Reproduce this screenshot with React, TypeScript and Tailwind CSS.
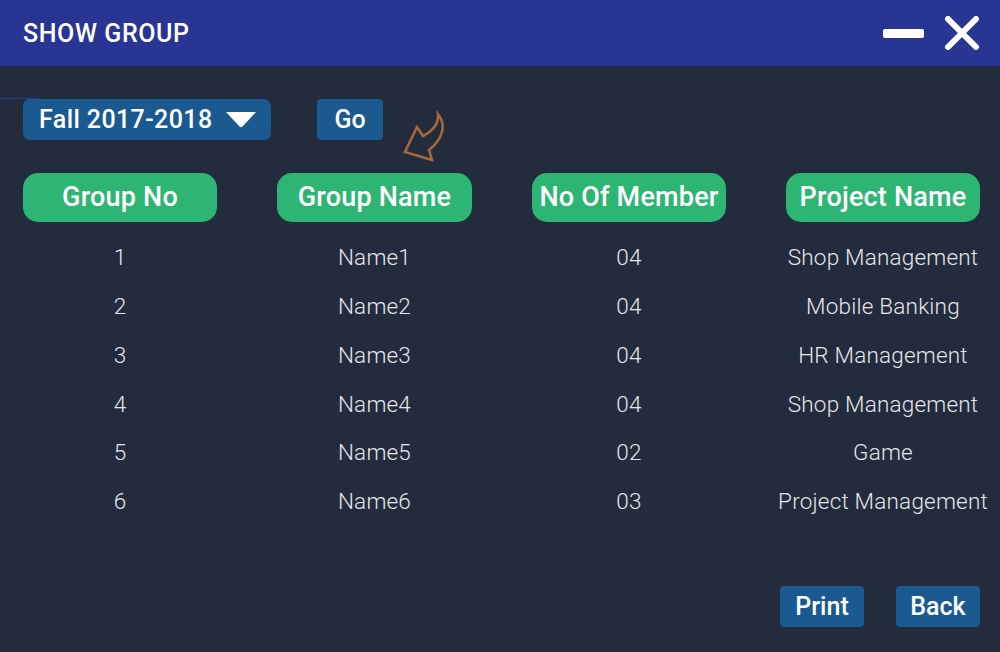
import React from 'react';

const rows = [
  { no: '1', name: 'Name1', members: '04', project: 'Shop Management' },
  { no: '2', name: 'Name2', members: '04', project: 'Mobile Banking' },
  { no: '3', name: 'Name3', members: '04', project: 'HR Management' },
  { no: '4', name: 'Name4', members: '04', project: 'Shop Management' },
  { no: '5', name: 'Name5', members: '02', project: 'Game' },
  { no: '6', name: 'Name6', members: '03', project: 'Project Management' },
];

const headers = ['Group No', 'Group Name', 'No Of Member', 'Project Name'];

export default function App() {
  return (
    <div className="w-[1000px] h-[652px] bg-[#222c3c] flex flex-col font-['Roboto',sans-serif] text-white overflow-hidden">
      {/* Title bar */}
      <div className="h-[66px] bg-[#283593] flex items-center pl-[23px] pr-[20px] shrink-0">
        <h1 className="text-[25px] font-medium tracking-[0.6px] flex-1 pt-[1px]">SHOW GROUP</h1>
        <div className="w-[41px] h-[9px] bg-white rounded-[2px] mr-[20px]" />
        <svg width="36" height="34" viewBox="0 0 36 34">
          <path d="M4 3 L32 31 M32 3 L4 31" stroke="white" strokeWidth="6" strokeLinecap="round" />
        </svg>
      </div>

      <div className="relative flex-1 flex flex-col">
        {/* stray guide line */}
        <div className="absolute left-0 top-[32px] w-[38px] h-px bg-[#2c3a8c]" />

        {/* Semester selector */}
        <div className="flex items-center gap-[46px] pl-[23px] pt-[33px]">
          <button className="h-[41px] w-[248px] bg-[#1b5a91] rounded-[7px] flex items-center pl-[16px] pr-[14px] text-[25px] font-medium tracking-[0.4px]">
            <span className="flex-1 text-left">Fall 2017-2018</span>
            <svg width="32" height="17" viewBox="0 0 32 17">
              <path d="M1 1 H31 L17.5 15.5 Q16 17 14.5 15.5 Z" fill="white" />
            </svg>
          </button>
          <button className="h-[41px] w-[66px] bg-[#1b5a91] rounded-[4px] text-[25px] font-medium">Go</button>
        </div>

        {/* annotation arrow */}
        <svg className="absolute left-[400px] top-[44px]" width="50" height="56" viewBox="400 110 50 56">
          <path
            d="M438 114 C446 124 444 138 429 150 L432 160 L405 152 L417 127 L423 136 C431 132 439 126 438 114 Z"
            fill="none"
            stroke="#a4683a"
            strokeWidth="2.6"
            strokeLinejoin="miter"
          />
        </svg>

        {/* Table */}
        <div className="grid grid-cols-[194px_195px_194px_194px] gap-x-[60px] pl-[23px] mt-[33px]">
          {headers.map((h) => (
            <div
              key={h}
              className="h-[49px] bg-[#2db673] rounded-[15px] flex items-center justify-center text-[27px] font-medium tracking-[0.2px] whitespace-nowrap"
            >
              {h}
            </div>
          ))}
        </div>

        <div className="pl-[23px] mt-[12px]">
          {rows.map((r) => (
            <div
              key={r.no}
              className="grid grid-cols-[194px_195px_194px_194px] gap-x-[60px] h-[48.7px] items-center text-[22.5px] font-light tracking-[0.2px] text-[#e4e6ea]"
            >
              <div className="flex justify-center">{r.no}</div>
              <div className="flex justify-center">{r.name}</div>
              <div className="flex justify-center">{r.members}</div>
              <div className="flex justify-center whitespace-nowrap">{r.project}</div>
            </div>
          ))}
        </div>

        <div className="flex-1" />

        {/* Footer buttons */}
        <div className="flex justify-end gap-[32px] pr-[20px] pb-[25px]">
          <button className="h-[41px] w-[84px] bg-[#1b5a91] rounded-[4px] text-[25px] font-medium">Print</button>
          <button className="h-[41px] w-[84px] bg-[#1b5a91] rounded-[4px] text-[25px] font-medium">Back</button>
        </div>
      </div>
    </div>
  );
}
